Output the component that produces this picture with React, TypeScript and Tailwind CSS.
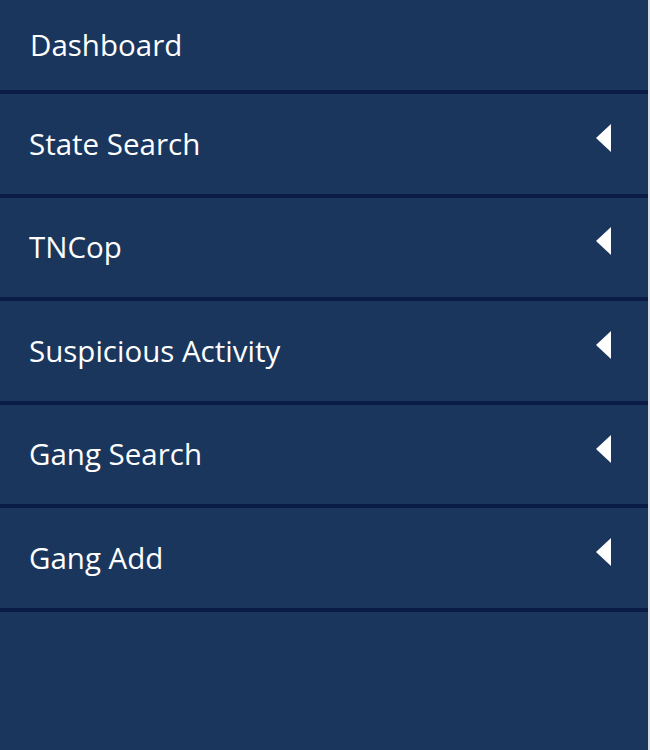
import React from "react";

const items = ["State Search", "TNCop", "Suspicious Activity", "Gang Search", "Gang Add"];

function Caret() {
  return (
    <svg width="16" height="28" viewBox="0 0 16 28" className="mb-[12px]">
      <polygon points="15,0 15,28 0,14" fill="#ffffff" />
    </svg>
  );
}

export default function App() {
  return (
    <div className="flex h-[750px] w-[650px] bg-[#1b365d]" style={{ fontFamily: '"Open Sans", sans-serif' }}>
      <nav className="flex w-[648px] flex-col">
        <div className="flex h-[94px] items-center border-b-4 border-[#0a1c46] pl-[30px] text-[29.5px] text-white">
          Dashboard
        </div>
        {items.map((label) => (
          <div
            key={label}
            className="flex h-[103.6px] items-center justify-between border-b-4 border-[#0a1c46] pl-[29px] pr-[36px] text-[29.5px] text-white"
          >
            <span>{label}</span>
            <Caret />
          </div>
        ))}
      </nav>
      <div className="w-[2px] bg-[#dcdde0]" />
    </div>
  );
}
